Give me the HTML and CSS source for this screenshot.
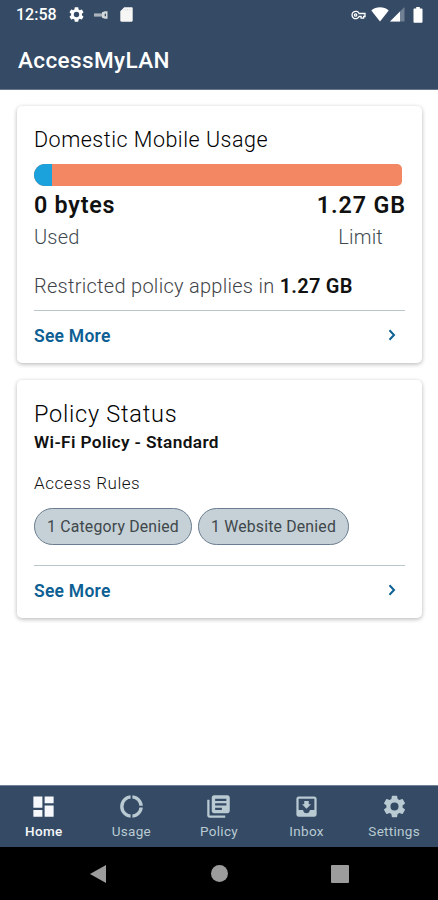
FILE: index.html
```html
<!DOCTYPE html>
<html lang="en">
<head>
<meta charset="utf-8">
<title>AccessMyLAN</title>
<link rel="stylesheet" href="styles.css">
</head>
<body>
<div class="screen">
  <header class="header">
    <div class="status">
      <span class="clock">12:58</span>
      <svg class="st-gear" viewBox="2 2 20 20"><path fill-rule="evenodd" d="M19.14 12.94c.04-.3.06-.61.06-.94s-.02-.64-.07-.94l2.03-1.58c.18-.14.23-.41.12-.61l-1.92-3.32c-.12-.22-.37-.29-.59-.22l-2.39.96c-.5-.38-1.03-.7-1.62-.94L14.4 2.81c-.04-.24-.24-.41-.48-.41h-3.84c-.24 0-.43.17-.47.41l-.36 2.54c-.59.24-1.13.57-1.62.94l-2.39-.96c-.22-.08-.47 0-.59.22L2.74 8.87c-.12.21-.08.47.12.61l2.03 1.58c-.05.3-.09.63-.09.94s.02.64.07.94l-2.03 1.58c-.18.14-.23.41-.12.61l1.92 3.32c.12.22.37.29.59.22l2.39-.96c.5.38 1.03.7 1.62.94l.36 2.54c.05.24.24.41.48.41h3.84c.24 0 .44-.17.47-.41l.36-2.54c.59-.24 1.13-.56 1.62-.94l2.39.96c.22.08.47 0 .59-.22l1.92-3.32c.12-.22.07-.47-.12-.61zM12 15.6a3.6 3.6 0 1 1 0-7.2 3.6 3.6 0 0 1 0 7.2z"/></svg>
      <svg class="st-wand" viewBox="0 0 14 8"><path opacity=".75" d="M0 2.4h8v3.2H0z"/><path fill-rule="evenodd" d="M8 1.3 11 .3h2.5v7.4H11l-3-1zM10.7 2.8v2.4H12V2.8z"/></svg>
      <svg class="st-card" viewBox="0 0 13 15"><path d="M4.2.3h7.3c.8 0 1.2.5 1.2 1.2v12c0 .7-.5 1.2-1.2 1.2h-10c-.7 0-1.2-.5-1.2-1.2V4.3z"/><path class="notch" d="M4.4 2h1v1.6h-1zM6.9 2h1v1.6h-1zM9.4 2h1v1.6h-1z"/></svg>
      <span class="grow"></span>
      <svg class="st-vpn" viewBox="0 0 15 10"><path class="line" d="M8.1 3.5H14v3h-1.4v1.7h-2.5V6.5h-2A3.7 3.7 0 1 1 8.1 3.5z"/><circle class="line" cx="4.6" cy="5" r="1.2"/></svg>
      <svg class="st-wifi" viewBox="0 0 18 15"><path d="M9 14.5.3 3.6C5 -.8 13 -.8 17.7 3.6z"/></svg>
      <svg class="st-signal" viewBox="0 0 15 15"><path opacity=".3" d="M14.5 0v14.5H0z"/><path d="M10 4.5v10H0z"/></svg>
      <svg class="st-battery" viewBox="0 0 10 16"><path d="M3.2 0h3.6v1.6h1.7c.6 0 1 .4 1 1v12.2c0 .6-.4 1-1 1h-7c-.6 0-1-.4-1-1V2.6c0-.6.4-1 1-1h1.7z"/></svg>
    </div>
    <h1 class="app-title">AccessMyLAN</h1>
  </header>

  <main class="content">
    <section class="card usage">
      <h2 class="card-title">Domestic Mobile Usage</h2>
      <div class="meter"><div class="meter-used"></div></div>
      <div class="figures"><span>0 bytes</span><span class="fig-limit">1.27 GB</span></div>
      <div class="captions"><span>Used</span><span class="cap-limit">Limit</span></div>
      <p class="notice">Restricted policy applies in <b>1.27 GB</b></p>
      <a class="more"><span>See More</span><svg class="chevron" viewBox="0 0 8 12"><path d="M1.5 1.3 6 6l-4.5 4.7"/></svg></a>
    </section>

    <section class="card policy">
      <h2 class="policy-title">Policy Status</h2>
      <p class="policy-name">Wi-Fi Policy - Standard</p>
      <p class="rules">Access Rules</p>
      <div class="chips"><span class="chip chip-category">1 Category Denied</span><span class="chip chip-website">1 Website Denied</span></div>
      <a class="more"><span>See More</span><svg class="chevron" viewBox="0 0 8 12"><path d="M1.5 1.3 6 6l-4.5 4.7"/></svg></a>
    </section>
  </main>

  <nav class="tabs">
    <a class="tab active"><svg viewBox="0 0 24 24"><path d="M3 13h8V3H3zm0 8h8v-6H3zm10 0h8V11h-8zm0-18v6h8V3z"/></svg><span>Home</span></a>
    <a class="tab"><svg viewBox="0 0 24 24"><circle class="ring" cx="12" cy="12" r="8.6"/><path class="gap" d="M11.2 1h1.6v6h-1.6zM11.2 17h1.6v6h-1.6zM17 11.4h6v1.4h-6z"/></svg><span>Usage</span></a>
    <a class="tab"><svg viewBox="0 0 24 24"><path d="M4 6H2v14c0 1.1.9 2 2 2h14v-2H4zm16-4H8c-1.1 0-2 .9-2 2v12c0 1.1.9 2 2 2h12c1.1 0 2-.9 2-2V4c0-1.1-.9-2-2-2zm-1 9H9V9h10zm-4 4H9v-2h6zm4-8H9V5h10z"/></svg><span>Policy</span></a>
    <a class="tab"><svg viewBox="0 0 24 24"><path d="M19 3H4.99c-1.11 0-1.98.9-1.98 2L3 19c0 1.1.88 2 1.99 2H19c1.1 0 2-.9 2-2V5c0-1.1-.9-2-2-2zm0 12h-4c0 1.66-1.35 3-3 3s-3-1.34-3-3H4.99V5H19zm-3-5h-2V7h-4v3H8l4 4z"/></svg><span>Inbox</span></a>
    <a class="tab"><svg viewBox="0 0 24 24"><path fill-rule="evenodd" d="M19.14 12.94c.04-.3.06-.61.06-.94s-.02-.64-.07-.94l2.03-1.58c.18-.14.23-.41.12-.61l-1.92-3.32c-.12-.22-.37-.29-.59-.22l-2.39.96c-.5-.38-1.03-.7-1.62-.94L14.4 2.81c-.04-.24-.24-.41-.48-.41h-3.84c-.24 0-.43.17-.47.41l-.36 2.54c-.59.24-1.13.57-1.62.94l-2.39-.96c-.22-.08-.47 0-.59.22L2.74 8.87c-.12.21-.08.47.12.61l2.03 1.58c-.05.3-.09.63-.09.94s.02.64.07.94l-2.03 1.58c-.18.14-.23.41-.12.61l1.92 3.32c.12.22.37.29.59.22l2.39-.96c.5.38 1.03.7 1.62.94l.36 2.54c.05.24.24.41.48.41h3.84c.24 0 .44-.17.47-.41l.36-2.54c.59-.24 1.13-.56 1.62-.94l2.39.96c.22.08.47 0 .59-.22l1.92-3.32c.12-.22.07-.47-.12-.61zM12 15.6a3.6 3.6 0 1 1 0-7.2 3.6 3.6 0 0 1 0 7.2z"/></svg><span>Settings</span></a>
  </nav>
  <div class="system">
    <svg class="sys-back" viewBox="0 0 16 18"><path d="M16 0v18L0 9z"/></svg>
    <span class="sys-home"></span>
    <span class="sys-recent"></span>
  </div>
</div>
</body>
</html>
```
FILE: styles.css
```css
* { box-sizing: border-box; margin: 0; padding: 0; }
body { background: #fff; font-family: Roboto, "Liberation Sans", sans-serif; color: #111; }
svg { display: block; fill: currentColor; flex: none; }
.screen { width: 438px; height: 900px; display: flex; flex-direction: column; overflow: hidden; white-space: nowrap; }

.header { height: 90px; background: #344a65; border-bottom: 1px solid #68768b; color: #fff; }
.status { height: 29px; padding-left: 16px; display: flex; align-items: center; }
.clock { width: 53px; font-size: 16px; font-weight: 500; line-height: 29px; }
.st-gear { width: 15px; height: 15px; }
.st-wand { width: 14px; height: 8px; margin-left: 10px; color: #d3d8d8; }
.st-card { width: 13px; height: 15px; margin-left: 12px; color: #f6f7f5; }
.notch { fill: #d6dadd; }
.grow { flex: 1; }
.st-vpn { width: 15px; height: 10px; }
.line { fill: none; stroke: currentColor; stroke-width: 1.3; }
.st-wifi { width: 18px; height: 15px; margin-left: 5px; }
.st-signal { width: 15px; height: 15px; margin-left: 1px; }
.st-battery { width: 10px; height: 16px; margin: 0 15px 0 8px; }
.app-title { padding-left: 18px; font-size: 22.5px; font-weight: 500; line-height: 62px; letter-spacing: .4px; }

.content { height: 695px; padding: 16px 16px 0 17px; }
.card { padding: 0 17px; background: #fff; border-radius: 5px; box-shadow: 0 1px 4px rgba(0,0,0,.22), 0 2px 5px rgba(0,0,0,.08); }
.usage { height: 257px; padding-top: 19px; }
.card-title { font-size: 21.5px; font-weight: 300; line-height: 29px; letter-spacing: .5px; color: #000; }
.meter { width: 368px; height: 22px; margin-top: 10px; border-radius: 11px 5px 5px 11px; background: #f38763; overflow: hidden; }
.meter-used { width: 18px; height: 22px; background: #1ba1dc; }
.figures { display: flex; justify-content: space-between; margin-top: 5px; font-size: 23.3px; font-weight: 600; line-height: 29px; letter-spacing: .75px; color: #111; }
.fig-limit { letter-spacing: .9px; margin-right: -1px; }
.captions { display: flex; justify-content: space-between; margin-top: 4px; padding-right: 22px; font-size: 20px; font-weight: 300; line-height: 26px; letter-spacing: .2px; color: #3f4a50; }
.notice { margin-top: 23px; font-size: 20px; font-weight: 300; line-height: 26px; letter-spacing: .28px; color: #3f4448; }
.notice b { font-weight: 600; letter-spacing: .25px; color: #111; }
.more { display: flex; justify-content: space-between; align-items: center; height: 51px; border-top: 1px solid #b9c6ca; font-size: 17.5px; font-weight: 600; letter-spacing: .25px; color: #0d6093; }
.usage .more { margin-top: 11px; }
.chevron { width: 8px; height: 12px; margin: 0 9px 2px 0; }
.chevron path { fill: none; stroke: currentColor; stroke-width: 2; }

.policy { height: 238px; margin-top: 17px; padding-top: 20px; }
.policy-title { font-size: 23.5px; font-weight: 300; line-height: 29px; letter-spacing: .75px; color: #000; }
.policy-name { font-size: 17.3px; font-weight: 600; line-height: 27px; letter-spacing: .36px; }
.rules { margin-top: 15px; font-size: 17px; font-weight: 300; line-height: 24px; letter-spacing: .55px; color: #111; }
.chips { display: flex; gap: 6px; margin-top: 13px; }
.chip { height: 37px; border: 1px solid #6b7d90; border-radius: 19px; background: #c5d1d6; color: #3f474c; font-size: 15.8px; line-height: 35px; letter-spacing: .2px; text-align: center; }
.chip-category { width: 158px; }
.chip-website { width: 151px; }
.policy .more { margin-top: 20px; }

.tabs { height: 62px; display: grid; grid-template-columns: repeat(5, 1fr); background: #344a65; border-top: 1px solid #71839a; color: #b9cad2; }
.tab { display: flex; flex-direction: column; align-items: center; padding-top: 7px; font-size: 13.5px; font-weight: 400; line-height: 20px; letter-spacing: .3px; }
.tab svg { width: 27px; height: 27px; margin-bottom: 1px; }
.tab.active { color: #f5f7fa; font-weight: 500; }
.ring { fill: none; stroke: currentColor; stroke-width: 3; }
.gap { fill: #344a65; }
.system { height: 53px; background: #000; display: flex; align-items: center; padding-left: 90px; color: #9c9c9c; }
.sys-back { width: 16px; height: 18px; }
.sys-home { width: 17px; height: 17px; margin-left: 105px; border-radius: 50%; background: #9c9c9c; }
.sys-recent { width: 18px; height: 18px; margin-left: 103px; border-radius: 1px; background: #9c9c9c; }
```
